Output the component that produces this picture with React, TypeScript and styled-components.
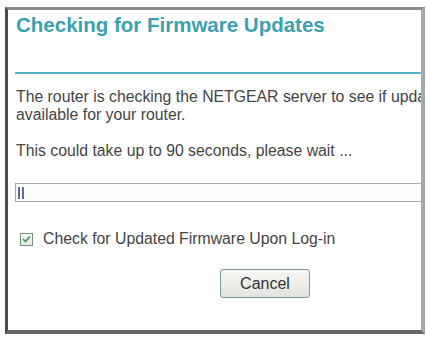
import React from "react";
import styled, { createGlobalStyle } from "styled-components";

const Global = createGlobalStyle`
  html, body { margin: 0; padding: 0; background: #ffffff; }
  body { font-family: "Liberation Sans", Arial, sans-serif; }
`;

const Page = styled.div`
  width: 426px;
  height: 337px;
  overflow: hidden;
  background: #fff;
  padding: 7px 1px 0 5px;
  box-sizing: border-box;
`;

const Frame = styled.div`
  width: 420px;
  height: 327px;
  box-sizing: border-box;
  border-left: 3px solid #4a4a4a;
  border-top: 3px solid #8c8c8c;
  border-right: 4px solid #a8a8a8;
  border-bottom: 4px solid #666;
  overflow: hidden;
  display: flex;
  flex-direction: column;
  padding-left: 8px;
`;

const Title = styled.h1`
  margin: 3px 0 0 0;
  font-size: 20.5px;
  line-height: 24px;
  font-weight: bold;
  color: #3d9fb2;
  white-space: nowrap;
`;

const Rule = styled.div`
  margin-top: 35px;
  height: 2px;
  margin-left: -1px;
  background: #5ab2c4;
`;

const Para = styled.p<{ $top: number }>`
  margin: ${(p) => p.$top}px 0 0 0;
  font-size: 15.8px;
  line-height: 18px;
  color: #444;
  white-space: nowrap;
`;

const Progress = styled.div`
  margin-top: 23px;
  margin-left: -1px;
  width: 440px;
  height: 19px;
  box-sizing: border-box;
  border: 1px solid #a9a9a9;
  background: #fcfdfd;
  display: flex;
  align-items: center;
  gap: 2px;
  padding-left: 2px;
`;

const Bar = styled.span`
  width: 2px;
  height: 12px;
  background: #6a64a8;
`;

const CheckRow = styled.label`
  margin-top: 28px;
  display: flex;
  align-items: center;
  gap: 10px;
  margin-left: 4px;
  font-size: 15.8px;
  line-height: 18px;
  color: #444;
  white-space: nowrap;
`;

const Box = styled.span`
  width: 13px;
  height: 13px;
  box-sizing: border-box;
  border: 1px solid #6f8f7a;
  background: linear-gradient(#f4f8f4, #e2ece4);
  display: flex;
  align-items: center;
  justify-content: center;
`;

const ButtonRow = styled.div`
  margin-top: 21px;
  padding-left: 204px;
`;

const CancelButton = styled.button`
  width: 90px;
  height: 29px;
  box-sizing: border-box;
  border: 1px solid #7b98a4;
  border-radius: 3px;
  background: linear-gradient(#f7f7f5, #e4e3df);
  font-family: "Liberation Sans", Arial, sans-serif;
  font-size: 16px;
  color: #333;
  padding: 0;
`;

export default function App() {
  return (
    <>
      <Global />
      <Page>
        <Frame>
          <Title>Checking for Firmware Updates</Title>
          <Rule />
          <Para $top={14}>
            The router is checking the NETGEAR server to see if upda
            <br />
            available for your router.
          </Para>
          <Para $top={18}>This could take up to 90 seconds, please wait ...</Para>
          <Progress>
            <Bar />
            <Bar />
          </Progress>
          <CheckRow>
            <Box>
              <svg width="9" height="8" viewBox="0 0 9 8">
                <path d="M1 4 L3.5 6.5 L8 1.5" fill="none" stroke="#3f8f4f" strokeWidth="1.6" />
              </svg>
            </Box>
            Check for Updated Firmware Upon Log-in
          </CheckRow>
          <ButtonRow>
            <CancelButton>Cancel</CancelButton>
          </ButtonRow>
        </Frame>
      </Page>
    </>
  );
}
